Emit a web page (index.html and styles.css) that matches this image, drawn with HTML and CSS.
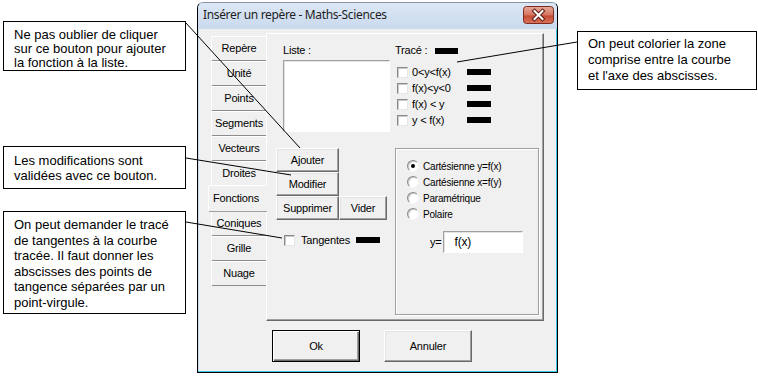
FILE: index.html
```html
<!DOCTYPE html>
<html lang="fr">
<head>
  <meta charset="UTF-8">
  <meta name="viewport" content="width=device-width, initial-scale=1.0">
  <title>Insérer un repère - Maths-Sciences</title>
  <link rel="stylesheet" href="styles.css">
</head>
<body>
  <div class="page">
    <div class="notes-left">
      <div class="note note-add">Ne pas oublier de cliquer<br>sur ce bouton pour ajouter<br>la fonction à la liste.</div>
      <div class="note note-edit">Les modifications sont<br>validées avec ce bouton.</div>
      <div class="note note-tan">On peut demander le tracé<br>de tangentes à la courbe<br>tracée. Il faut donner les<br>abscisses des points de<br>tangence séparées par un<br>point-virgule.</div>
    </div>

    <div class="dialog">
      <div class="titlebar">
        <span class="title">Insérer un repère - Maths-Sciences</span>
        <div class="close">
          <svg width="31" height="18" viewBox="0 0 31 18">
            <defs>
              <linearGradient id="red" x1="0" y1="0" x2="0" y2="1">
                <stop offset="0" stop-color="#e9a99b"/>
                <stop offset="0.5" stop-color="#d47560"/>
                <stop offset="0.55" stop-color="#c44b33"/>
                <stop offset="1" stop-color="#d9735a"/>
              </linearGradient>
            </defs>
            <rect x="0.5" y="0.5" width="30" height="17" rx="3" fill="url(#red)" stroke="#7a2b1f"/>
            <path d="M11.5 5 L19.5 13 M19.5 5 L11.5 13" stroke="#5b1a10" stroke-width="4" stroke-linecap="square"/>
            <path d="M11.5 5 L19.5 13 M19.5 5 L11.5 13" stroke="#fff" stroke-width="2" stroke-linecap="square"/>
          </svg>
        </div>
      </div>

      <div class="client">
        <div class="main">
          <div class="tabs">
            <div class="tab">Repère</div>
            <div class="tab">Unité</div>
            <div class="tab">Points</div>
            <div class="tab">Segments</div>
            <div class="tab">Vecteurs</div>
            <div class="tab">Droites</div>
            <div class="tab active">Fonctions</div>
            <div class="tab">Coniques</div>
            <div class="tab">Grille</div>
            <div class="tab">Nuage</div>
          </div>

          <div class="panel">
            <div class="list-col">
              <div class="label-row">Liste :</div>
              <div class="listbox"></div>
            </div>

            <div class="trace-col">
              <div class="label-row">Tracé : <span class="swatch swatch-trace"></span></div>
              <div class="fill-rows">
                <div class="check-row"><span class="check"></span><span class="check-label">0&lt;y&lt;f(x)</span><span class="swatch"></span></div>
                <div class="check-row"><span class="check"></span><span class="check-label">f(x)&lt;y&lt;0</span><span class="swatch"></span></div>
                <div class="check-row"><span class="check"></span><span class="check-label">f(x) &lt; y</span><span class="swatch"></span></div>
                <div class="check-row"><span class="check"></span><span class="check-label">y &lt; f(x)</span><span class="swatch"></span></div>
              </div>
            </div>

            <div class="button-col">
              <button class="btn btn-wide">Ajouter</button>
              <button class="btn btn-wide">Modifier</button>
              <div class="btn-pair">
                <button class="btn btn-wide">Supprimer</button>
                <button class="btn btn-small">Vider</button>
              </div>
              <div class="check-row tangent-row"><span class="check"></span><span class="check-label tangent-label">Tangentes</span><span class="swatch"></span></div>
            </div>

            <div class="group">
              <div class="radio-row"><span class="radio on"></span>Cartésienne y=f(x)</div>
              <div class="radio-row"><span class="radio"></span>Cartésienne x=f(y)</div>
              <div class="radio-row"><span class="radio"></span>Paramétrique</div>
              <div class="radio-row"><span class="radio"></span>Polaire</div>
              <div class="expr-row">y=<div class="textbox">f(x)</div></div>
            </div>
          </div>
        </div>

        <div class="actions">
          <button class="btn btn-action btn-default">Ok</button>
          <button class="btn btn-action">Annuler</button>
        </div>
      </div>
    </div>

    <div class="notes-right">
      <div class="note note-fill">On peut colorier la zone<br>comprise entre la courbe<br>et l'axe des abscisses.</div>
    </div>

    <svg class="leaders" width="758" height="382" viewBox="0 0 758 382">
      <line x1="186" y1="23" x2="300" y2="148"/>
      <line x1="186" y1="158" x2="291" y2="175"/>
      <line x1="186" y1="222" x2="282" y2="238"/>
      <line x1="577" y1="42" x2="457" y2="62"/>
    </svg>
  </div>
</body>
</html>
```

FILE: styles.css
```css
* {
  box-sizing: border-box;
}
body {
  margin: 0;
  background: #fff;
  color: #000;
  font-family: "Liberation Sans", Arial, sans-serif;
}
.page {
  position: relative;
  display: flex;
  align-items: flex-start;
  width: 758px;
  height: 382px;
  overflow: hidden;
}

/* callouts */
.notes-left {
  display: flex;
  flex-direction: column;
  width: 183px;
  margin-left: 3px;
}
.note {
  border: 1px solid #000;
  background: #fff;
  font-size: 13px;
  padding-left: 10px;
}
.note-add {
  margin-top: 21px;
  height: 50px;
  padding-top: 6px;
  line-height: 14px;
}
.note-edit {
  margin-top: 75px;
  height: 43px;
  padding-top: 6px;
  line-height: 15px;
}
.note-tan {
  margin-top: 22px;
  height: 103px;
  padding-top: 5px;
  line-height: 15.5px;
}
.notes-right {
  margin: 31px 0 0 19px;
}
.note-fill {
  width: 180px;
  height: 59px;
  padding-top: 4px;
  line-height: 16px;
}
.leaders {
  position: absolute;
  left: 0;
  top: 0;
  pointer-events: none;
}
.leaders line {
  stroke: #000;
  stroke-width: 1;
}

/* window */
.dialog {
  margin: 2px 0 0 11px;
  width: 361px;
  height: 371px;
  display: flex;
  flex-direction: column;
  background: #f0f0f0;
  border: 1px solid #000;
  border-top-color: #8593a4;
  border-radius: 6px 6px 0 0;
  box-shadow: inset -1px -1px 0 #3ac6ea, inset 1px 0 0 #c6dcf0;
  font-size: 11px;
  letter-spacing: -0.2px;
}
.titlebar {
  height: 26px;
  display: flex;
  justify-content: space-between;
  align-items: flex-start;
  padding: 0 3px 0 5px;
  background: linear-gradient(#dce7f5, #c9d9ee);
  border-radius: 5px 5px 0 0;
}
.title {
  font-family: "Noto Sans", "Liberation Sans", sans-serif;
  font-size: 12px;
  letter-spacing: -0.35px;
  line-height: 24px;
  color: #1e1e1e;
}
.close {
  margin-top: 3px;
  height: 18px;
}
.close svg {
  display: block;
}
.client {
  flex: 1;
  display: flex;
  flex-direction: column;
  padding: 4px 0 0 10px;
}
.main {
  display: flex;
}

/* tabs */
.tabs {
  width: 58px;
  padding-top: 3px;
  display: flex;
  flex-direction: column;
}
.tab {
  width: 55px;
  height: 25px;
  margin-left: 3px;
  line-height: 23px;
  text-align: center;
  border: 1px solid #fff;
  border-right: none;
  border-bottom-color: #8c8c8c;
  border-radius: 2px 0 0 2px;
  background: #f0f0f0;
}
.tab.active {
  position: relative;
  z-index: 1;
  width: 59px;
  height: 27px;
  margin: -1px -1px -1px 0;
  line-height: 25px;
  padding-right: 4px;
  border-bottom-color: #a0a0a0;
}

/* tab page */
.panel {
  width: 278px;
  height: 288px;
  border: 1px solid;
  border-color: #fff #696969 #696969 #fff;
  box-shadow: inset -1px -1px 0 #a0a0a0;
  display: grid;
  grid-template-columns: 128px 148px;
  grid-template-rows: auto 1fr;
  row-gap: 16px;
  padding-top: 8px;
}
.label-row {
  height: 16px;
  line-height: 16px;
  display: flex;
  align-items: center;
}
.list-col {
  padding-left: 16px;
}
.listbox {
  margin-top: 2px;
  width: 107px;
  height: 72px;
  background: #fff;
  border: 1px solid;
  border-color: #a0a0a0 #fff #fff #a0a0a0;
  box-shadow: inset 1px 1px 0 #e3e3e3;
}
.swatch {
  display: inline-block;
  width: 24px;
  height: 6px;
  background: #000;
}
.swatch-trace {
  width: 23px;
  margin: 2px 0 0 8px;
}
.fill-rows {
  margin-top: 6px;
}
.check-row {
  height: 16px;
  display: flex;
  align-items: center;
  padding-left: 2px;
}
.check {
  width: 11px;
  height: 11px;
  background: #fff;
  border: 1px solid;
  border-color: #8a8a8a #e6e6e6 #e6e6e6 #8a8a8a;
  box-shadow: inset 1px 1px 0 #c8c8c8;
}
.check-label {
  width: 55px;
  margin-left: 4px;
}

/* buttons */
.button-col {
  padding-left: 9px;
}
.btn {
  display: block;
  height: 24px;
  padding: 0;
  font-family: "Liberation Sans", Arial, sans-serif;
  font-size: 11px;
  letter-spacing: -0.2px;
  color: #000;
  background: #f0f0f0;
  border: 1px solid;
  border-color: #fff #696969 #696969 #fff;
  box-shadow: inset -1px -1px 0 #a0a0a0, inset 1px 1px 0 #e3e3e3;
}
.btn-wide {
  width: 63px;
}
.btn-small {
  width: 48px;
}
.btn-pair {
  display: flex;
}
.tangent-row {
  margin-top: 12px;
  padding-left: 8px;
}
.tangent-label {
  margin-left: 6px;
}

/* radio group */
.group {
  width: 144px;
  height: 167px;
  border: 1px solid #a0a0a0;
  box-shadow: inset 1px 1px 0 #fff, 1px 1px 0 #fff;
  padding: 9px 0 0 11px;
  font-size: 10px;
}
.radio-row {
  height: 16px;
  display: flex;
  align-items: center;
}
.radio {
  position: relative;
  width: 12px;
  height: 12px;
  margin-right: 4px;
  border-radius: 50%;
  border: 1px solid;
  border-color: #8a8a8a #f4f4f4 #f4f4f4 #8a8a8a;
  background: #fff;
  box-shadow: inset 1px 1px 0 #c8c8c8;
}
.radio.on::after {
  content: "";
  position: absolute;
  left: 3px;
  top: 3px;
  width: 4px;
  height: 4px;
  border-radius: 50%;
  background: #000;
}
.expr-row {
  margin-top: 9px;
  padding-left: 23px;
  display: flex;
  align-items: center;
  font-size: 11px;
}
.textbox {
  width: 80px;
  height: 22px;
  margin-left: 1px;
  padding-left: 11px;
  line-height: 20px;
  font-size: 12px;
  background: #fff;
  border: 1px solid;
  border-color: #a0a0a0 #fff #fff #a0a0a0;
  box-shadow: inset 1px 1px 0 #e3e3e3;
}

/* bottom buttons */
.actions {
  display: flex;
  gap: 24px;
  margin: 9px 0 0 64px;
}
.btn-action {
  width: 88px;
  height: 32px;
}
.btn-default {
  border-color: #000;
  box-shadow: inset 1px 1px 0 #fff, inset -1px -1px 0 #696969, inset -2px -2px 0 #a0a0a0;
}
```
